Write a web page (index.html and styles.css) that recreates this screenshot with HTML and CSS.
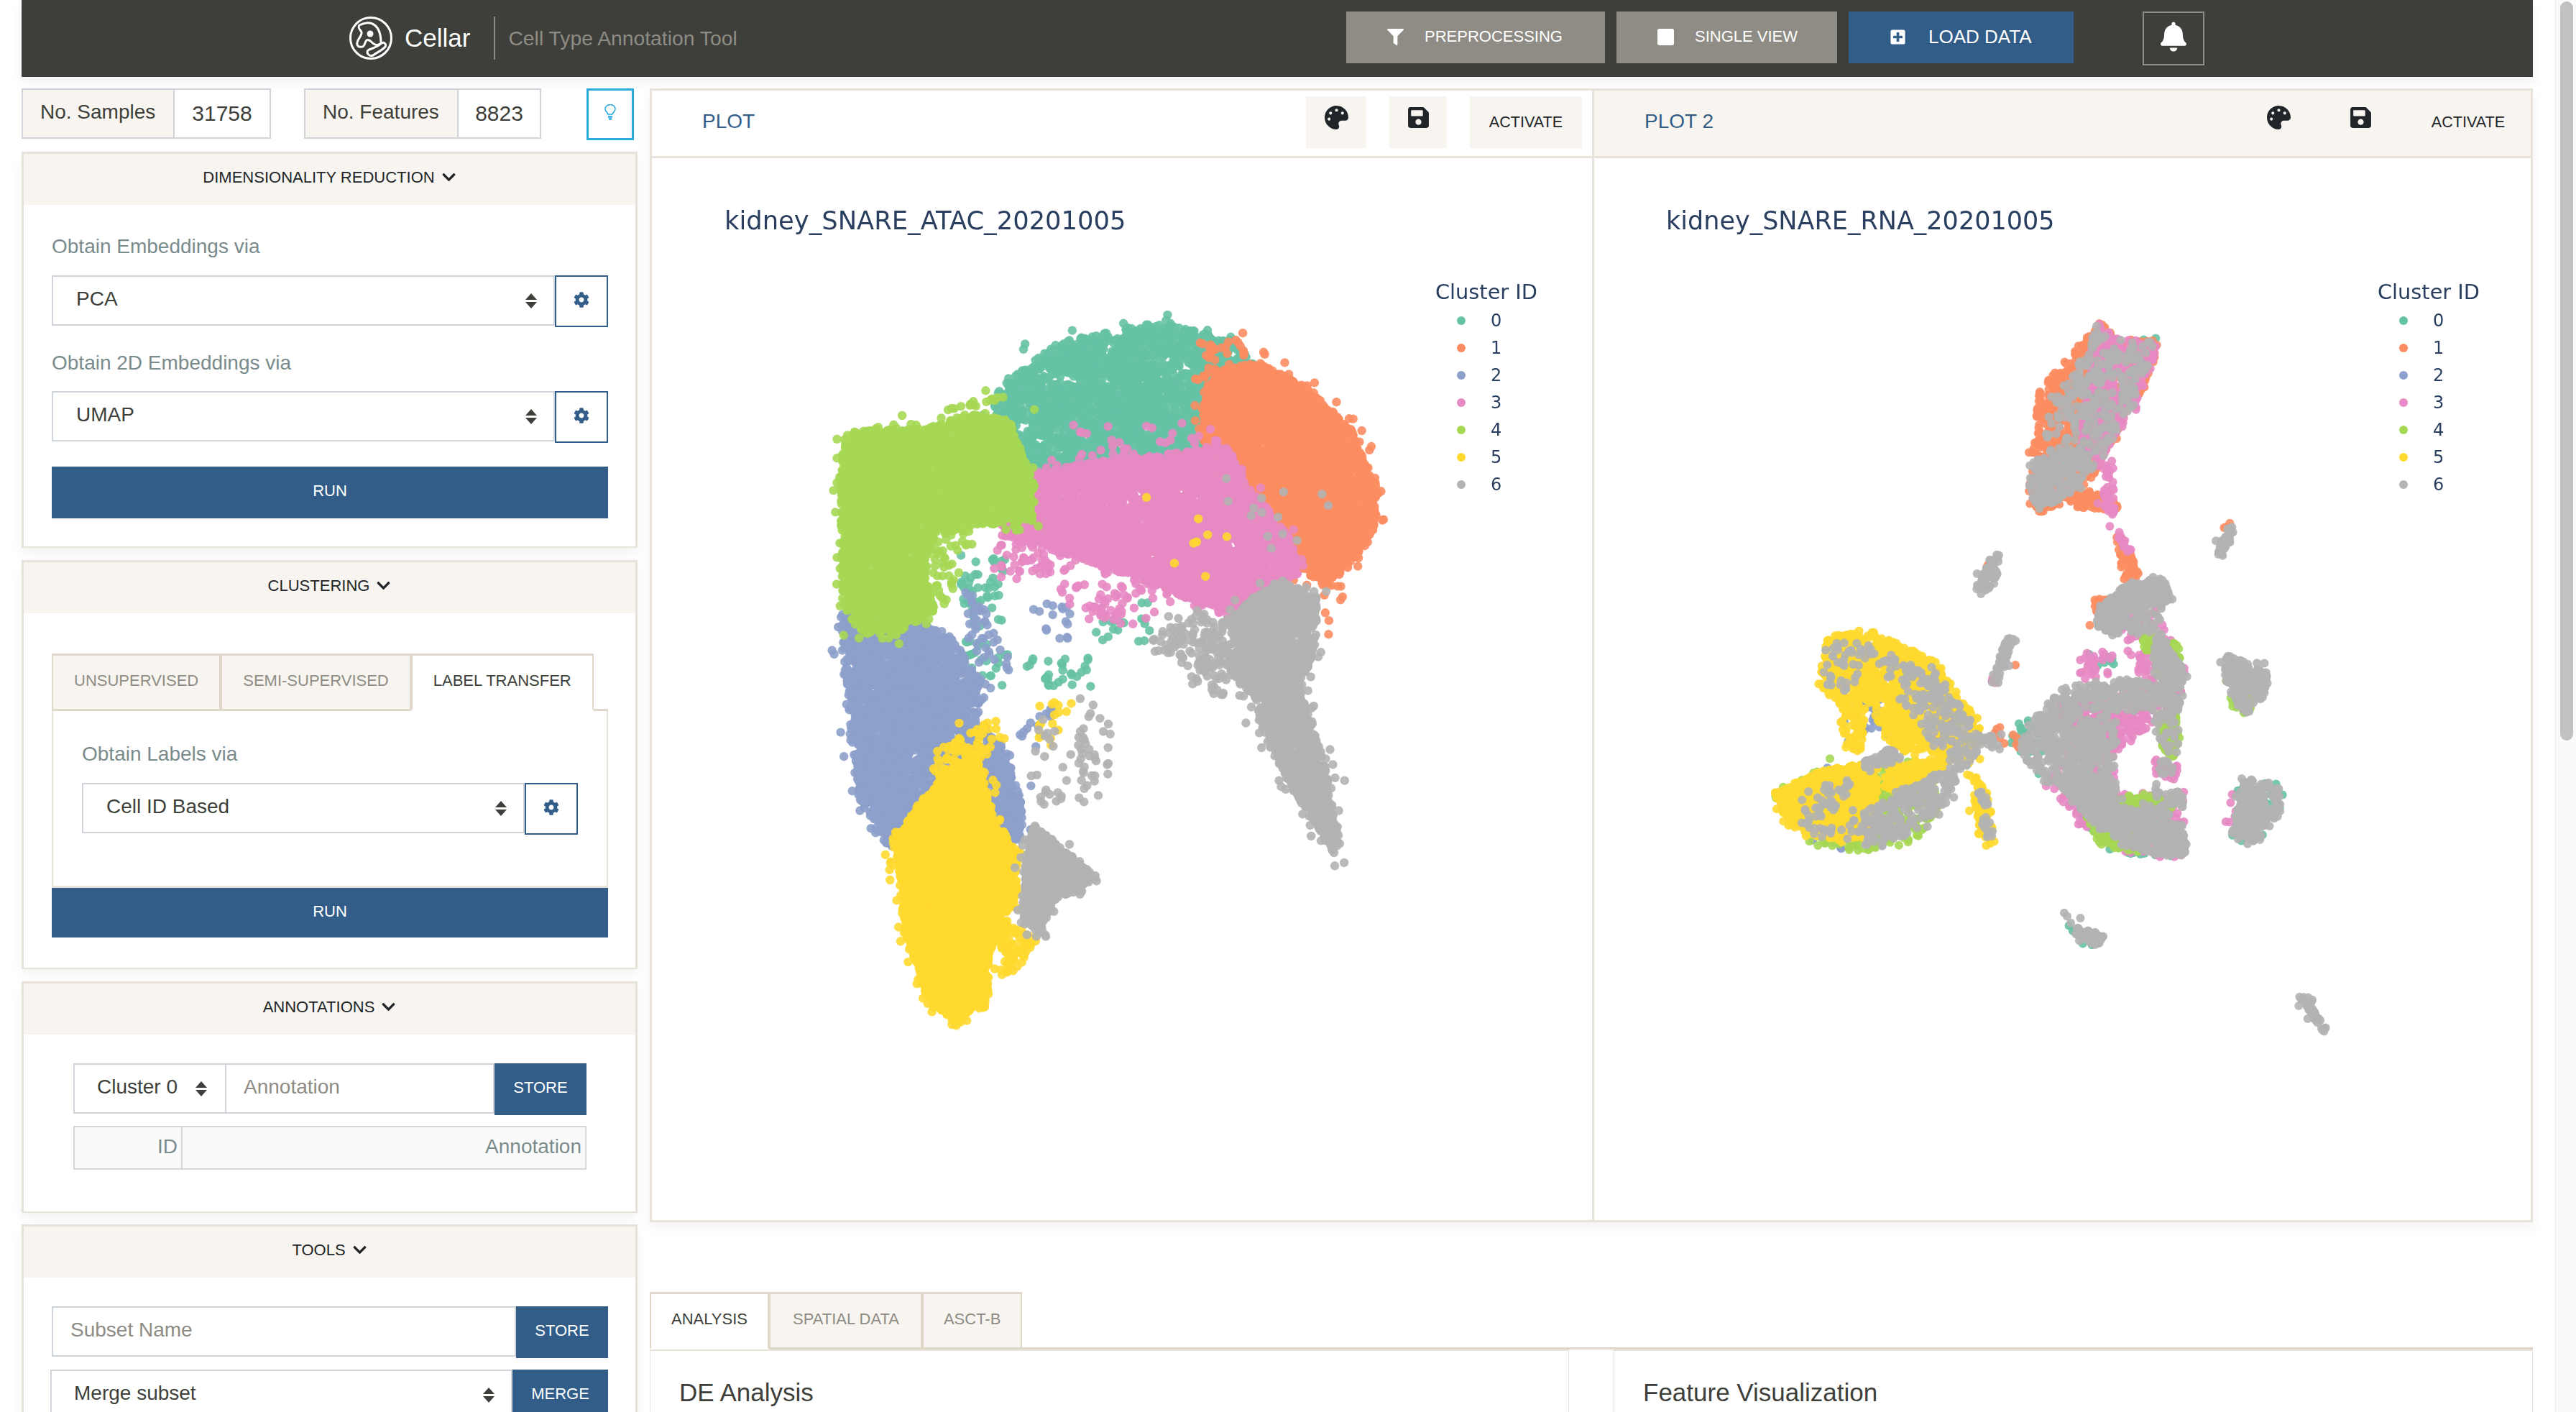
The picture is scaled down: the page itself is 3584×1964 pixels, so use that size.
FILE: index.html
```html
<!DOCTYPE html>
<html lang="en">

<head>
  <meta charset="UTF-8">
  <meta name="viewport" content="width=device-width, initial-scale=1.0">
  <title>Cellar</title>
  <link rel="stylesheet" href="styles.css">
</head>

<body>

  <svg class="sprites" width="0" height="0">
    <symbol id="i-chevron" viewBox="0 0 448 512"><path d="M207.029 381.476L12.686 187.132c-9.373-9.373-9.373-24.569 0-33.941l22.667-22.667c9.357-9.357 24.522-9.375 33.901-.04L224 284.505l154.745-154.021c9.379-9.335 24.544-9.317 33.901.04l22.667 22.667c9.373 9.373 9.373 24.569 0 33.941L240.971 381.476c-9.373 9.372-24.569 9.372-33.942 0z"/></symbol>
    <symbol id="i-cog" viewBox="0 0 512 512"><path d="M487.4 315.7l-42.6-24.6c4.3-23.2 4.3-47 0-70.2l42.6-24.6c4.9-2.8 7.1-8.6 5.5-14-11.1-35.6-30-67.8-54.7-94.6-3.8-4.1-10-5.1-14.8-2.3L380.8 110c-17.9-15.4-38.5-27.3-60.8-35.1V25.8c0-5.6-3.9-10.5-9.4-11.7-36.7-8.2-74.3-7.8-109.2 0-5.5 1.2-9.4 6.1-9.4 11.7V75c-22.2 7.9-42.8 19.8-60.8 35.1L88.7 85.5c-4.9-2.8-11-1.9-14.8 2.3-24.7 26.7-43.6 58.9-54.7 94.6-1.7 5.4.6 11.2 5.5 14L67.3 221c-4.3 23.2-4.3 47 0 70.2l-42.6 24.6c-4.9 2.8-7.1 8.6-5.5 14 11.1 35.6 30 67.8 54.7 94.6 3.8 4.1 10 5.1 14.8 2.3l42.6-24.6c17.9 15.4 38.5 27.3 60.8 35.1v49.2c0 5.6 3.9 10.5 9.4 11.7 36.7 8.2 74.3 7.8 109.2 0 5.5-1.2 9.4-6.1 9.4-11.7v-49.2c22.2-7.9 42.8-19.8 60.8-35.1l42.6 24.6c4.9 2.8 11 1.9 14.8-2.3 24.7-26.7 43.6-58.9 54.7-94.6 1.5-5.5-.7-11.3-5.6-14.1zM256 336c-44.1 0-80-35.9-80-80s35.9-80 80-80 80 35.9 80 80-35.9 80-80 80z"/></symbol>
    <symbol id="i-palette" viewBox="0 0 512 512"><path d="M204.3 5C104.9 24.4 24.8 104.3 5.2 203.4c-37 187 131.7 326.4 258.8 306.7 41.2-6.4 61.4-54.6 42.5-91.7-23.1-45.4 9.9-98.4 60.9-98.4h79.7c35.8 0 64.8-29.6 64.9-65.3C511.5 97.1 368.1-26.9 204.3 5zM96 320c-17.7 0-32-14.3-32-32s14.3-32 32-32 32 14.3 32 32-14.3 32-32 32zm32-128c-17.7 0-32-14.3-32-32s14.3-32 32-32 32 14.3 32 32-14.3 32-32 32zm128-64c-17.7 0-32-14.3-32-32s14.3-32 32-32 32 14.3 32 32-14.3 32-32 32zm128 64c-17.7 0-32-14.3-32-32s14.3-32 32-32 32 14.3 32 32-14.3 32-32 32z"/></symbol>
    <symbol id="i-save" viewBox="0 0 448 512"><path d="M433.941 129.941l-83.882-83.882A48 48 0 0 0 316.118 32H48C21.49 32 0 53.49 0 80v352c0 26.51 21.49 48 48 48h352c26.51 0 48-21.49 48-48V163.882a48 48 0 0 0-14.059-33.941zM224 416c-35.346 0-64-28.654-64-64 0-35.346 28.654-64 64-64s64 28.654 64 64c0 35.346-28.654 64-64 64zm96-304.52V212c0 6.627-5.373 12-12 12H76c-6.627 0-12-5.373-12-12V108c0-6.627 5.373-12 12-12h228.52c3.183 0 6.235 1.264 8.485 3.515l3.48 3.48A11.996 11.996 0 0 1 320 111.48z"/></symbol>
  </svg>

  <nav class="navbar">
    <div class="brand">
      <svg class="logo" viewBox="0 0 60 60" fill="none" stroke="#fff" stroke-width="3">
        <circle cx="30" cy="30" r="28.5"/>
        <path d="M14 12C20 9 27 8 32 10C39 13 44 22 44 37C41 40 37 40 34 38C30 35 27 31 24 33C21 36 22 41 18 42C13 43 10 41 11 36C12 30 18 27 17 22C16 18 11 17 14 12Z" stroke-linejoin="round"/>
        <circle cx="29" cy="24" r="4.5" fill="#fff" stroke="none"/>
        <path d="M26 47C31 44 39 43 45 37C48 35 52 38 50 42C47 46 40 49 33 54C28 56 23 51 26 47Z" stroke-linejoin="round"/>
      </svg>
      <span class="brand-name">Cellar</span>
      <span class="brand-sub">Cell Type Annotation Tool</span>
    </div>
    <div class="nav-actions">
      <button class="nav-btn btn-pre">
        <svg class="nav-icon" viewBox="0 0 512 512"><path d="M487.976 0H24.028C2.71 0-8.047 25.866 7.058 40.971L192 225.941V432c0 7.831 3.821 15.17 10.237 19.662l80 55.98C298.02 518.69 320 507.493 320 487.98V225.941l184.947-184.97C520.021 25.896 509.338 0 487.976 0z"/></svg>
        PREPROCESSING
      </button>
      <button class="nav-btn btn-single">
        <svg class="nav-icon" viewBox="0 0 448 448"><rect width="448" height="448" rx="48"/></svg>
        SINGLE VIEW
      </button>
      <button class="nav-btn btn-load">
        <svg class="nav-icon" viewBox="0 0 448 512"><path d="M400 32H48C21.5 32 0 53.5 0 80v352c0 26.5 21.5 48 48 48h352c26.5 0 48-21.5 48-48V80c0-26.5-21.5-48-48-48zm-32 252c0 6.6-5.4 12-12 12h-92v92c0 6.6-5.4 12-12 12h-56c-6.6 0-12-5.4-12-12v-92H92c-6.6 0-12-5.4-12-12v-56c0-6.6 5.4-12 12-12h92v-92c0-6.6 5.4-12 12-12h56c6.6 0 12 5.4 12 12v92h92c6.6 0 12 5.4 12 12v56z"/></svg>
        LOAD DATA
      </button>
      <button class="bell-btn">
        <svg class="bell-icon" viewBox="0 0 448 512"><path d="M224 512c35.32 0 63.97-28.65 63.97-64H160.03c0 35.35 28.65 64 63.97 64zm215.39-149.71c-19.32-20.76-55.47-51.99-55.47-154.29 0-77.7-54.48-139.9-127.94-155.16V32c0-17.67-14.32-32-31.98-32s-31.98 14.33-31.98 32v20.84C118.56 68.1 64.08 130.3 64.08 208c0 102.3-36.15 133.53-55.47 154.29-6 6.45-8.66 14.16-8.61 21.71.11 16.4 12.98 32 32.1 32h383.8c19.12 0 32-15.6 32.1-32 .05-7.55-2.61-15.27-8.61-21.71z"/></svg>
      </button>
    </div>
  </nav>

  <div class="layout">

    <aside class="sidebar">
      <div class="stats">
        <div class="stat stat-samples"><span class="stat-label">No. Samples</span><span class="stat-value">31758</span></div>
        <div class="stat stat-features"><span class="stat-label">No. Features</span><span class="stat-value">8823</span></div>
        <button class="hint-btn">
          <svg viewBox="0 0 16 22" width="16" height="22" fill="none" stroke="#29abe0" stroke-width="1.6">
            <path d="M5 14C4.5 11.5 1 10 1 6.5A7 6 0 0 1 15 6.5C15 10 11.5 11.5 11 14Z"/>
            <path d="M5 17.5H11M6 20.5H10" stroke-width="2.4"/>
          </svg>
        </button>
      </div>

      <section class="panel panel-dim">
        <header class="panel-header">DIMENSIONALITY REDUCTION <svg class="chevron"><use href="#i-chevron"/></svg></header>
        <div class="panel-body">
          <label class="field-label">Obtain Embeddings via</label>
          <div class="select-row">
            <div class="select-wrap"><select><option>PCA</option></select></div>
            <button class="gear-btn"><svg><use href="#i-cog"/></svg></button>
          </div>
          <label class="field-label field-next">Obtain 2D Embeddings via</label>
          <div class="select-row">
            <div class="select-wrap"><select><option>UMAP</option></select></div>
            <button class="gear-btn"><svg><use href="#i-cog"/></svg></button>
          </div>
          <button class="run-btn run-dim">RUN</button>
        </div>
      </section>

      <section class="panel panel-cluster">
        <header class="panel-header">CLUSTERING <svg class="chevron"><use href="#i-chevron"/></svg></header>
        <div class="panel-body">
          <div class="tabs">
            <div class="tab">UNSUPERVISED</div>
            <div class="tab">SEMI-SUPERVISED</div>
            <div class="tab active">LABEL TRANSFER</div>
          </div>
          <div class="tab-content">
            <label class="field-label">Obtain Labels via</label>
            <div class="select-row">
              <div class="select-wrap"><select><option>Cell ID Based</option></select></div>
              <button class="gear-btn"><svg><use href="#i-cog"/></svg></button>
            </div>
          </div>
          <button class="run-btn">RUN</button>
        </div>
      </section>

      <section class="panel panel-annot">
        <header class="panel-header">ANNOTATIONS <svg class="chevron"><use href="#i-chevron"/></svg></header>
        <div class="panel-body">
          <div class="input-row">
            <div class="select-wrap select-cluster"><select><option>Cluster 0</option></select></div>
            <input class="text-input" placeholder="Annotation">
            <button class="side-btn">STORE</button>
          </div>
          <table class="annot-table">
            <tr><th class="col-id">ID</th><th>Annotation</th></tr>
          </table>
        </div>
      </section>

      <section class="panel panel-tools">
        <header class="panel-header">TOOLS <svg class="chevron"><use href="#i-chevron"/></svg></header>
        <div class="panel-body">
          <div class="input-row">
            <input class="text-input" placeholder="Subset Name">
            <button class="side-btn">STORE</button>
          </div>
          <div class="input-row merge-row">
            <div class="select-wrap"><select><option>Merge subset</option></select></div>
            <button class="side-btn btn-merge">MERGE</button>
          </div>
        </div>
      </section>
    </aside>

    <main class="main">
      <div class="plots">
        <section class="plot plot-one">
          <header class="plot-header">
            <span class="plot-name">PLOT</span>
            <button class="plot-btn btn-palette"><svg><use href="#i-palette"/></svg></button>
            <button class="plot-btn btn-save"><svg><use href="#i-save"/></svg></button>
            <button class="plot-btn btn-activate">ACTIVATE</button>
          </header>
          <div class="plot-body">
            <canvas class="scatter" data-plot="atac"></canvas>
            <h3 class="plot-title">kidney_SNARE_ATAC_20201005</h3>
            <div class="legend"></div>
          </div>
        </section>
        <section class="plot plot-two">
          <header class="plot-header">
            <span class="plot-name">PLOT 2</span>
            <button class="plot-btn btn-palette"><svg><use href="#i-palette"/></svg></button>
            <button class="plot-btn btn-save"><svg><use href="#i-save"/></svg></button>
            <button class="plot-btn btn-activate">ACTIVATE</button>
          </header>
          <div class="plot-body">
            <canvas class="scatter" data-plot="rna"></canvas>
            <h3 class="plot-title">kidney_SNARE_RNA_20201005</h3>
            <div class="legend"></div>
          </div>
        </section>
      </div>

      <div class="tabs main-tabs">
        <div class="tab active">ANALYSIS</div>
        <div class="tab">SPATIAL DATA</div>
        <div class="tab">ASCT-B</div>
      </div>
      <div class="panes">
        <div class="pane"><h2>DE Analysis</h2></div>
        <div class="pane"><h2>Feature Visualization</h2></div>
      </div>
    </main>

  </div>

  <div class="scrollbar"><div class="scrollbar-thumb"></div></div>

  <script src="plot.js"></script>

</body>

</html>
```

FILE: styles.css
```css
* {
  margin: 0;
  padding: 0;
  box-sizing: border-box;
  outline: none;
}

html,
body {
  height: 1964px;
  overflow: hidden;
}

body {
  background: #fff;
  color: #3e3f3a;
  font-family: "Liberation Sans", Arial, sans-serif;
  font-size: 28px;
}

button,
select,
input {
  font-family: inherit;
  color: inherit;
  border-radius: 0;
}

.sprites {
  position: absolute;
}

/* navbar */

.navbar {
  display: flex;
  justify-content: space-between;
  width: 3494px;
  height: 107px;
  margin-left: 30px;
  padding: 16px 457px 0 456px;
  background: #3e3f3a;
  box-shadow: 0 8px 16px rgba(0, 0, 0, 0.06);
}

.brand {
  display: flex;
  align-items: center;
  height: 60px;
  margin-top: 7px;
}

.logo {
  width: 60px;
  height: 60px;
}

.brand-name {
  margin-left: 17px;
  color: #fff;
  font-size: 35px;
}

.brand-sub {
  display: flex;
  align-items: center;
  height: 60px;
  margin-left: 33px;
  padding-left: 18px;
  border-left: 2px solid #8e8c84;
  color: #8e8c84;
  font-size: 28.3px;
}

.nav-actions {
  display: flex;
  align-items: flex-start;
  gap: 16px;
}

.nav-btn {
  display: flex;
  align-items: center;
  gap: 29px;
  height: 72px;
  padding: 0 0 2px 57px;
  border: 0;
  background: #8e8c84;
  color: #fff;
  font-size: 22px;
  white-space: nowrap;
}

.btn-pre {
  width: 360px;
}

.btn-single {
  width: 307px;
}

.btn-load {
  width: 313px;
  gap: 31px;
  background: #325d88;
  font-size: 26px;
}

.nav-icon {
  width: 23px;
  height: 23px;
  fill: #fff;
}

.bell-btn {
  display: flex;
  justify-content: center;
  width: 86px;
  height: 75px;
  margin-left: 80px;
  padding-top: 12px;
  border: 2px solid #8e8c84;
  background: transparent;
}

.bell-icon {
  width: 36px;
  height: 42px;
  fill: #fff;
}

/* page layout */

.layout {
  display: flex;
  align-items: flex-start;
  gap: 17px;
  width: 3494px;
  margin-left: 30px;
  padding-top: 16px;
}

.sidebar {
  display: flex;
  flex-direction: column;
  flex: 0 0 857px;
  min-width: 0;
}

.stats {
  display: flex;
  height: 88px;
}

.stat {
  display: flex;
  height: 70px;
  border: 2px solid #ced4da;
}

.stat-samples {
  width: 347px;
}

.stat-features {
  width: 330px;
  margin-left: 46px;
}

.stat-label {
  display: flex;
  align-items: center;
  padding: 0 24px 4px;
  border-right: 2px solid #ced4da;
  background: #f8f5f0;
}

.stat-samples .stat-label {
  width: 211px;
}

.stat-features .stat-label {
  width: 213px;
}

.stat-value {
  display: flex;
  flex: 1;
  align-items: center;
  justify-content: center;
  font-size: 30px;
}

.hint-btn {
  display: flex;
  justify-content: center;
  width: 66px;
  height: 72px;
  margin-left: 63px;
  padding-top: 19px;
  border: 3px solid #29abe0;
  background: #fff;
}

/* sidebar panels */

.panel {
  margin-bottom: 17px;
  border: 3px solid #e8e3da;
  border-bottom-width: 2px;
  box-shadow: 0 8px 16px rgba(0, 0, 0, 0.05);
}

.panel-header {
  display: flex;
  align-items: center;
  justify-content: center;
  gap: 9px;
  height: 71px;
  padding-bottom: 6px;
  background: #f8f5f0;
  color: #212529;
  font-size: 22px;
}

.chevron {
  width: 21px;
  height: 21px;
  fill: #212529;
}

.panel-dim {
  height: 551px;
}

.panel-dim .panel-body {
  padding: 37px 38px 0 39px;
}

.panel-cluster {
  height: 569px;
}

.panel-cluster .panel-body {
  padding: 56px 38px 0 39px;
}

.panel-annot {
  height: 322px;
  margin-bottom: 16px;
}

.panel-annot .panel-body {
  padding: 40px 68px 0 69px;
}

.panel-tools .panel-body {
  padding: 40px 38px 0 39px;
}

.field-label {
  display: block;
  height: 42px;
  margin-bottom: 19px;
  color: #7a8b8c;
  line-height: 42px;
}

.field-next {
  margin-top: 29px;
  margin-bottom: 18px;
}

.select-row {
  display: flex;
  align-items: flex-start;
}

.select-wrap {
  position: relative;
  flex: 1;
}

.select-wrap::before,
.select-wrap::after {
  content: '';
  position: absolute;
  right: 25px;
  border-left: 8px solid transparent;
  border-right: 8px solid transparent;
}

.select-wrap::before {
  top: 25px;
  border-bottom: 9px solid #3e3f3a;
}

.select-wrap::after {
  top: 37px;
  border-top: 9px solid #3e3f3a;
}

select {
  display: block;
  width: 100%;
  height: 70px;
  padding: 0 0 5px 32px;
  border: 2px solid #ced4da;
  background: #fff;
  font-size: 28px;
  appearance: none;
}

.gear-btn {
  display: flex;
  flex: 0 0 74px;
  justify-content: center;
  height: 72px;
  padding-top: 21px;
  border: 2px solid #325d88;
  background: #fff;
}

.gear-btn svg {
  width: 22px;
  height: 22px;
  fill: #325d88;
}

.run-btn {
  display: block;
  width: 100%;
  height: 72px;
  padding-bottom: 4px;
  border: 0;
  background: #325d88;
  color: #fff;
  font-size: 22px;
}

.run-dim {
  margin-top: 33px;
}

/* tabs */

.tabs {
  display: flex;
  height: 80px;
  border-bottom: 3px solid #dfd7ca;
}

.tab {
  display: flex;
  align-items: center;
  height: 80px;
  padding: 0 29px 4px;
  border: 2px solid #dfd7ca;
  border-width: 3px 2px 3px 2px;
  background: #f8f5f0;
  color: #8e8c84;
  font-size: 22px;
}

.tab.active {
  border-bottom-color: #fff;
  background: #fff;
  color: #3e3f3a;
}

.tab-content {
  height: 243px;
  padding: 39px 40px 0 40px;
  border: 2px solid #e8e3da;
  border-width: 0 2px;
}

.panel-cluster .run-btn {
  border-top: 3px solid #e8e3da;
}

/* input rows */

.input-row {
  display: flex;
  align-items: flex-start;
}

.select-cluster {
  flex: 0 0 211px;
}

.select-cluster select {
  padding-left: 31px;
  border-right: 0;
}

.text-input {
  flex: 1;
  width: 0;
  min-width: 0;
  height: 70px;
  padding: 0 0 4px 24px;
  border: 2px solid #ced4da;
  font-size: 28px;
}

.text-input::placeholder {
  color: #8e8c84;
  opacity: 1;
}

.side-btn {
  flex: 0 0 128px;
  height: 72px;
  padding-bottom: 4px;
  border: 0;
  background: #325d88;
  color: #fff;
  font-size: 22px;
}

.annot-table {
  width: 714px;
  height: 61px;
  margin-top: 15px;
  border: 2px solid #d7d7d7;
  border-collapse: collapse;
  background: #fafafa;
}

.annot-table th {
  padding: 0 5px 4px 0;
  border: 2px solid #d7d7d7;
  color: #7a8b8c;
  font-size: 28px;
  font-weight: 400;
  text-align: right;
}

.annot-table .col-id {
  width: 150px;
}

.merge-row {
  margin: 16px 0 0 -2px;
}

.merge-row select {
  padding-left: 31px;
}

.btn-merge {
  flex-basis: 133px;
}

/* plots */

.main {
  flex: 1;
  min-width: 0;
}

.plots {
  display: grid;
  grid-template-columns: 1311px 1fr;
  height: 1577px;
  border: 3px solid #e8e3da;
  box-shadow: 0 8px 16px rgba(0, 0, 0, 0.05);
}

.plot {
  display: flex;
  flex-direction: column;
}

.plot-one {
  border-right: 3px solid #e8e3da;
}

.plot-header {
  display: flex;
  flex: 0 0 94px;
  align-items: center;
  padding: 0 14px 4px 70px;
  border-bottom: 3px solid #e8e3da;
  gap: 32px;
}

.plot-two .plot-header {
  padding-right: 9px;
  background: #f8f5f0;
}

.plot-name {
  flex: 1;
  margin-bottom: 2px;
  color: #325d88;
  font-size: 28px;
}

.plot-btn {
  height: 72px;
  border: 0;
  background: #f8f5f0;
  color: #212529;
  font-size: 21.6px;
}

.plot-btn svg {
  display: block;
  margin: 0 auto 12px;
  height: 33px;
  fill: #212529;
}

.btn-palette {
  width: 84px;
}

.btn-palette svg {
  width: 33px;
}

.btn-save {
  width: 80px;
}

.btn-save svg {
  width: 29px;
}

.btn-activate {
  width: 156px;
}

.plot-body {
  position: relative;
  flex: 1;
  padding: 66px 0 0 101px;
}

.scatter {
  position: absolute;
  top: 0;
  left: 0;
  width: 100%;
  height: 100%;
}

.plot-title {
  position: relative;
  color: #2a3f5f;
  font-family: "DejaVu Sans", Verdana, sans-serif;
  font-size: 35.3px;
  font-weight: 400;
  line-height: 42px;
}

.plot-two .plot-title {
  margin-left: -1px;
  font-size: 35px;
}

.legend {
  position: absolute;
  top: 167px;
  left: 1090px;
  color: #2a3f5f;
  font-family: "DejaVu Sans", Verdana, sans-serif;
}

.legend-title {
  margin-bottom: 2px;
  font-size: 28.8px;
  line-height: 38px;
}

.legend-item {
  display: flex;
  align-items: center;
  gap: 35px;
  height: 38px;
  padding-left: 30px;
  font-size: 24px;
}

.legend-dot {
  width: 12px;
  height: 12px;
  border-radius: 50%;
}

/* bottom tabs */

.main-tabs {
  margin-top: 97px;
}

.main-tabs .tab {
  padding: 0 28px 4px;
}

.main-tabs .tab:nth-child(2) {
  padding: 0 30px 4px 31px;
}

.panes {
  display: grid;
  grid-template-columns: 1279px 1279px;
  justify-content: space-between;
}

.pane {
  height: 300px;
  padding: 37px 0 0 40px;
  border: 1px solid #e8e3da;
  border-top: 2px solid #e8e3da;
}

.pane h2 {
  font-size: 35px;
  font-weight: 400;
  line-height: 42px;
}

/* the window scrollbar */

.scrollbar {
  position: fixed;
  top: 0;
  right: 0;
  bottom: 0;
  width: 29px;
  border-left: 1px solid #ececec;
  background: #fafafa;
}

.scrollbar-thumb {
  width: 18px;
  height: 1028px;
  margin: 2px 0 0 6px;
  border-radius: 9px;
  background: #c1c1c1;
}
```

FILE: plot.js
```js
const COLORS = ['#66c2a5', '#fc8d62', '#8da0cb', '#e78ac3', '#a6d854', '#ffd92f', '#b3b3b3']

// small seeded generator so that the picture is the same on every load
function makeRandom(seed) {
  return function () {
    seed = (seed + 0x6D2B79F5) | 0
    let t = Math.imul(seed ^ (seed >>> 15), 1 | seed)
    t = (t + Math.imul(t ^ (t >>> 7), 61 | t)) ^ t
    return ((t ^ (t >>> 14)) >>> 0) / 4294967296
  }
}

function inside(poly, x, y) {
  let hit = false
  for (let i = 0, j = poly.length - 1; i < poly.length; j = i++) {
    let a = poly[i], b = poly[j]
    if ((a[1] > y) !== (b[1] > y) && x < (b[0] - a[0]) * (y - a[1]) / (b[1] - a[1]) + a[0]) hit = !hit
  }
  return hit
}

function samplePoly(poly, n, random, plot) {
  let xs = poly.map(p => p[0]), ys = poly.map(p => p[1])
  let x0 = Math.min(...xs), x1 = Math.max(...xs), y0 = Math.min(...ys), y1 = Math.max(...ys)
  let out = []
  while (out.length < n) {
    let x = x0 + random() * (x1 - x0), y = y0 + random() * (y1 - y0)
    if (!inside(poly, x, y)) continue
    // some points stray past the edge of their cluster
    if (random() < plot.fuzz) {
      x += (random() + random() - 1) * plot.spread
      y += (random() + random() - 1) * plot.spread
    }
    out.push([x, y])
  }
  return out
}

// [cluster, count, polygon] in plot coordinates
const ATAC = {
  ox: 1100, oy: 420, sx: 1.742, sy: 1.479, r: 6.2, fuzz: 0.2, spread: 40,
  regions: [
    [0, 3000, [[490, 210], [570, 130], [640, 85], [800, 55], [920, 45], [1030, 72], [1120, 115], [1160, 200], [1060, 340], [700, 380], [600, 340], [520, 300]]],
    [1, 3600, [[1000, 180], [1050, 140], [1130, 122], [1250, 175], [1360, 265], [1420, 375], [1415, 465], [1370, 525], [1320, 565], [1290, 580], [1150, 500], [1000, 300]]],
    [1, 30, [[990, 80], [1100, 70], [1110, 110], [1000, 170]]],
    [1, 12, [[1290, 560], [1350, 560], [1320, 720], [1290, 660]]],
    [2, 3400, [[120, 640], [300, 640], [400, 700], [470, 800], [450, 860], [510, 910], [565, 1040], [560, 1110], [300, 1130], [230, 1120], [165, 1020], [135, 800]]],
    [3, 4000, [[630, 345], [760, 325], [1000, 305], [1060, 300], [1110, 380], [1215, 485], [1230, 560], [1100, 650], [1040, 640], [880, 580], [760, 545], [620, 510], [505, 480], [560, 360]]],
    [3, 60, [[640, 580], [900, 580], [880, 660], [780, 670], [660, 620]]],
    [3, 40, [[480, 480], [620, 520], [640, 560], [520, 570]]],
    [3, 26, [[680, 250], [1040, 240], [1060, 300], [700, 330]]],
    [0, 70, [[390, 520], [520, 520], [530, 800], [420, 750], [420, 640]]],
    [0, 28, [[560, 730], [730, 730], [720, 800], [560, 790]]],
    [0, 18, [[700, 640], [900, 610], [880, 700], [760, 710]]],
    [0, 14, [[440, 200], [540, 150], [600, 130], [520, 190]]],
    [2, 40, [[420, 580], [480, 640], [530, 760], [440, 720]]],
    [2, 16, [[580, 620], [680, 620], [680, 700], [620, 680]]],
    [2, 14, [[540, 830], [640, 830], [600, 920], [540, 880]]],
    [4, 3600, [[122, 305], [150, 265], [330, 260], [430, 228], [530, 242], [570, 330], [590, 370], [585, 450], [450, 460], [350, 475], [325, 560], [350, 635], [270, 675], [170, 685], [125, 625], [122, 450]]],
    [4, 40, [[340, 480], [450, 460], [420, 520], [400, 620], [350, 620]]],
    [4, 20, [[340, 230], [550, 200], [610, 230], [500, 190]]],
    [5, 3600, [[255, 1105], [330, 1010], [450, 920], [490, 1060], [555, 1135], [545, 1230], [480, 1340], [480, 1430], [400, 1485], [330, 1430], [272, 1280]]],
    [5, 70, [[360, 920], [510, 850], [490, 920], [420, 960], [340, 1030]]],
    [5, 70, [[500, 1260], [600, 1310], [560, 1360], [510, 1390]]],
    [5, 16, [[590, 810], [700, 820], [640, 950], [590, 880]]],
    [5, 8, [[780, 360], [1080, 470], [1060, 600], [860, 530]]],
    [6, 170, [[870, 680], [1000, 640], [1080, 640], [1140, 820], [1000, 740], [880, 720]]],
    [6, 1700, [[1060, 660], [1100, 625], [1180, 575], [1280, 605], [1270, 720], [1235, 800], [1295, 950], [1335, 1130], [1310, 1130], [1220, 1010], [1140, 880], [1120, 810]]],
    [6, 40, [[930, 730], [1100, 760], [1130, 820], [980, 800]]],
    [6, 800, [[590, 1075], [745, 1190], [640, 1230], [605, 1300], [565, 1280], [570, 1140]]],
    [6, 40, [[690, 820], [770, 820], [770, 1030], [680, 1030]]],
    [6, 24, [[590, 880], [680, 880], [680, 1050], [590, 1050]]],
    [6, 14, [[1040, 340], [1310, 420], [1250, 500], [1000, 500]]]
  ]
}

const RNA = {
  ox: 2400, oy: 400, sx: 1.742, sy: 1.452, r: 6, fuzz: 0.12, spread: 24,
  regions: [
    // top island
    [1, 1100, [[905, 65], [950, 105], [1050, 105], [1040, 150], [990, 240], [930, 320], [900, 370], [850, 430], [760, 455], [735, 410], [750, 300], [760, 210], [810, 160], [870, 110]]],
    [3, 400, [[905, 65], [950, 105], [1050, 105], [1040, 150], [990, 240], [930, 320], [900, 370], [860, 320], [880, 150]]],
    [0, 30, [[905, 60], [955, 100], [1050, 100], [930, 320], [910, 140]]],
    [6, 300, [[905, 65], [950, 105], [1045, 110], [990, 240], [930, 320], [900, 370], [760, 360], [790, 240], [880, 120]]],
    [6, 230, [[745, 350], [880, 320], [880, 380], [830, 420], [760, 450], [735, 410]]],
    // bridge
    [1, 70, [[850, 410], [930, 420], [960, 450], [850, 445]]],
    [3, 40, [[920, 350], [940, 350], [945, 470], [915, 440]]],
    [1, 60, [[945, 490], [975, 520], [1005, 585], [965, 590]]],
    [3, 12, [[940, 470], [985, 530], [965, 540]]],
    // centre
    [1, 40, [[895, 630], [930, 620], [935, 660], [895, 680]]],
    [3, 100, [[900, 650], [1060, 600], [1100, 770], [1000, 760]]],
    [6, 300, [[905, 650], [970, 600], [1060, 585], [1085, 630], [1040, 640], [980, 640], [960, 700], [905, 690]]],
    [6, 60, [[960, 640], [1060, 640], [1050, 700], [970, 700]]],
    [3, 80, [[1040, 690], [1115, 770], [1100, 850], [1000, 770]]],
    [4, 60, [[1000, 690], [1100, 720], [1110, 800], [1040, 780]]],
    [6, 90, [[1050, 690], [1115, 775], [1090, 800], [1030, 750]]],
    [3, 30, [[860, 740], [940, 730], [940, 780], [860, 790]]],
    [0, 10, [[880, 740], [960, 745], [950, 780], [880, 770]]],
    [3, 340, [[810, 830], [1000, 790], [1100, 820], [1050, 870], [980, 920], [900, 960], [810, 940]]],
    [6, 500, [[830, 800], [1000, 790], [1100, 820], [1040, 850], [950, 860], [950, 920], [880, 950], [820, 960], [770, 1000], [710, 930], [760, 860]]],
    [6, 120, [[780, 940], [940, 930], [950, 1040], [860, 1000]]],
    [3, 40, [[780, 940], [940, 930], [950, 1040], [860, 1000]]],
    [4, 160, [[1050, 860], [1095, 860], [1090, 950], [1060, 930]]],
    [6, 110, [[1040, 700], [1115, 775], [1095, 950], [1040, 900]]],
    [3, 30, [[1040, 950], [1100, 960], [1090, 1000], [1040, 990]]],
    [6, 12, [[1055, 950], [1085, 950], [1085, 985], [1055, 985]]],
    [0, 20, [[730, 860], [800, 900], [770, 1000], [700, 920]]],
    // lower band
    [3, 200, [[770, 980], [860, 960], [950, 1020], [1110, 1020], [1120, 1150], [990, 1150], [860, 1090]]],
    [4, 300, [[860, 1040], [1000, 1020], [1100, 1030], [1000, 1140], [910, 1130]]],
    [0, 40, [[860, 1060], [1000, 1140], [1110, 1150], [980, 1145], [880, 1090]]],
    [6, 560, [[790, 985], [860, 985], [950, 1050], [1060, 1050], [1115, 1090], [1115, 1145], [1080, 1150], [960, 1125], [880, 1070]]],
    [6, 30, [[1040, 1010], [1110, 1010], [1110, 1050], [1040, 1050]]],
    // left fans
    [5, 900, [[250, 700], [360, 695], [520, 760], [630, 900], [590, 970], [500, 940], [420, 880], [340, 840], [290, 850], [225, 800]]],
    [5, 60, [[280, 850], [340, 850], [330, 940], [280, 930]]],
    [2, 30, [[280, 840], [400, 810], [420, 900], [290, 930]]],
    [6, 200, [[340, 720], [520, 780], [630, 910], [590, 970], [480, 900], [420, 830]]],
    [6, 40, [[230, 720], [340, 710], [340, 830], [230, 800]]],
    [5, 140, [[360, 860], [450, 860], [530, 940], [410, 930]]],
    [2, 26, [[110, 1020], [240, 960], [470, 1110], [330, 1140], [220, 1125]]],
    [4, 520, [[110, 1020], [240, 970], [370, 950], [500, 960], [520, 1050], [470, 1110], [330, 1140], [220, 1125]]],
    [5, 1000, [[120, 1020], [240, 975], [370, 955], [370, 1040], [340, 1115], [220, 1110], [150, 1080]]],
    [5, 140, [[400, 960], [560, 950], [470, 1030], [380, 1010]]],
    [6, 60, [[180, 1020], [300, 990], [340, 1115], [200, 1110]]],
    [6, 250, [[330, 1060], [430, 1010], [610, 950], [580, 970], [520, 1050], [460, 1105], [340, 1130]]],
    [6, 50, [[330, 960], [400, 930], [430, 950], [340, 980]]],
    // yellow column and strips
    [5, 70, [[600, 985], [640, 1020], [655, 1125], [620, 1130], [605, 1060]]],
    [6, 24, [[610, 1010], [640, 1030], [650, 1110], [625, 1100]]],
    [1, 12, [[640, 880], [730, 905], [720, 930], [650, 920]]],
    [6, 16, [[630, 900], [670, 900], [670, 930], [630, 930]]],
    [0, 8, [[690, 870], [730, 870], [720, 940], [690, 920]]],
    // small islands
    [1, 6, [[635, 550], [665, 550], [650, 580], [625, 575]]],
    [6, 50, [[605, 610], [650, 540], [665, 535], [660, 590], [620, 620]]],
    [0, 6, [[600, 620], [660, 525], [650, 570]]],
    [6, 36, [[1190, 540], [1210, 490], [1232, 482], [1225, 515], [1195, 545]]],
    [1, 4, [[1205, 480], [1230, 480], [1220, 500]]],
    [6, 50, [[645, 790], [685, 705], [700, 710], [665, 790]]],
    [3, 3, [[645, 790], [660, 790], [650, 805]]],
    [1, 1, [[700, 760], [710, 760], [705, 770]]],
    [4, 40, [[1210, 790], [1300, 800], [1270, 865], [1230, 850]]],
    [3, 30, [[1225, 800], [1320, 790], [1270, 860]]],
    [6, 170, [[1215, 740], [1335, 785], [1300, 830], [1260, 865], [1240, 840], [1210, 800]]],
    [0, 30, [[1240, 985], [1355, 1000], [1350, 1060], [1290, 1125], [1215, 1110], [1240, 1040]]],
    [3, 30, [[1220, 1020], [1300, 1010], [1290, 1120], [1220, 1090]]],
    [6, 190, [[1250, 990], [1352, 1005], [1350, 1060], [1290, 1122], [1225, 1105], [1245, 1040]]],
    [0, 14, [[810, 1255], [860, 1300], [925, 1305], [900, 1335], [850, 1310]]],
    [6, 70, [[815, 1255], [850, 1290], [920, 1310], [900, 1332], [850, 1305]]],
    [6, 40, [[1390, 1430], [1400, 1428], [1458, 1498], [1450, 1506]]]
  ]
}

function drawPlot(canvas, plot, seed) {
  let box = canvas.getBoundingClientRect()
  canvas.width = box.width
  canvas.height = box.height
  let ctx = canvas.getContext('2d')
  let random = makeRandom(seed)
  let traces = COLORS.map(() => [])

  plot.regions.forEach(([cluster, n, poly]) => {
    traces[cluster].push(...samplePoly(poly, n, random, plot))
  })

  // same order as the legend, so the last clusters end up on top
  traces.forEach((points, cluster) => {
    ctx.fillStyle = COLORS[cluster]
    ctx.globalAlpha = 0.9
    points.forEach(([x, y]) => {
      ctx.beginPath()
      ctx.arc(plot.ox + x / plot.sx - box.left, plot.oy + y / plot.sy - box.top, plot.r, 0, Math.PI * 2)
      ctx.fill()
    })
  })
}

document.querySelectorAll('.legend').forEach(legend => {
  let html = '<div class="legend-title">Cluster ID</div>'
  COLORS.forEach((color, i) => {
    html += `<div class="legend-item"><span class="legend-dot" style="background:${color}"></span>${i}</div>`
  })
  legend.innerHTML = html
})

drawPlot(document.querySelector('[data-plot=atac]'), ATAC, 11)
drawPlot(document.querySelector('[data-plot=rna]'), RNA, 29)
```
